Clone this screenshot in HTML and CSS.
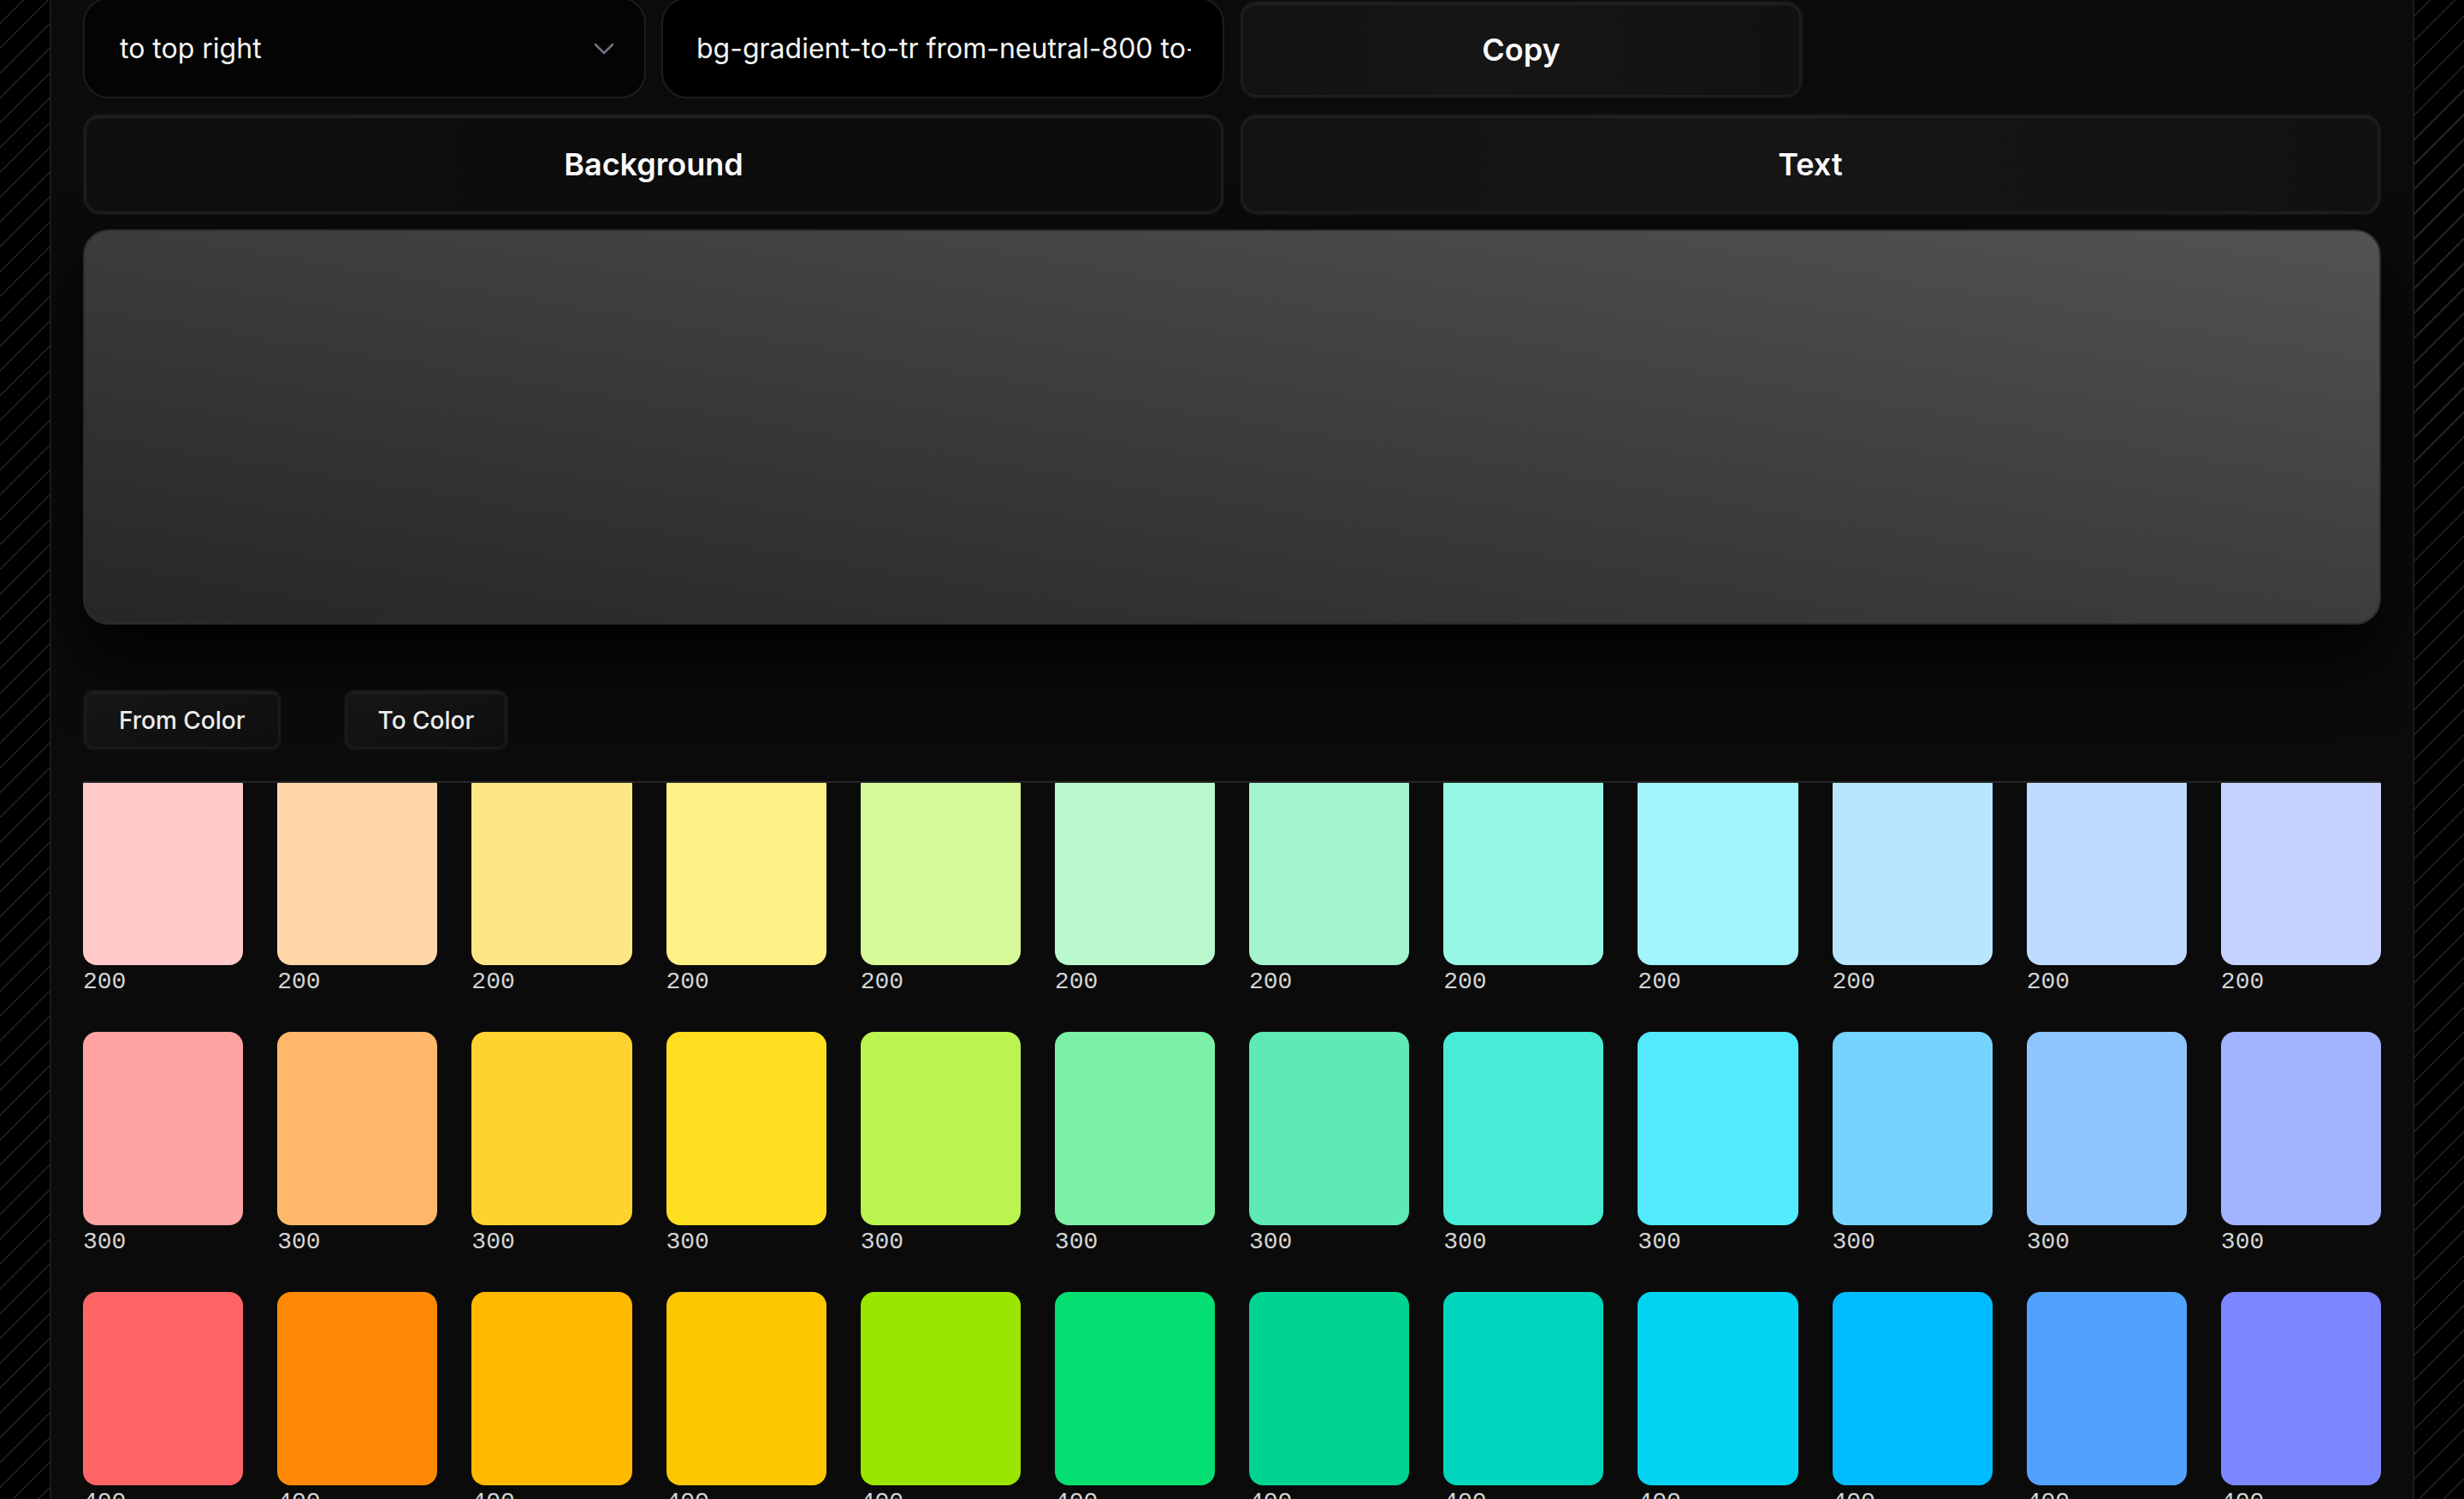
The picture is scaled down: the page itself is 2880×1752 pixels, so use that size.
FILE: index.html
```html
<!DOCTYPE html>
<html lang="en">
<head>
<meta charset="utf-8">
<title>Gradient Generator</title>
<link rel="stylesheet" href="styles.css">
</head>
<body>
<main class="page">
  <div class="controls">
    <div class="select">
      <span>to top right</span>
      <svg class="chev" width="26" height="16" viewBox="0 0 26 16"><path d="M3 3 L13 13 L23 3" fill="none" stroke="#6b7280" stroke-width="2.6" stroke-linecap="round" stroke-linejoin="round"/></svg>
    </div>
    <div class="input"><span>bg-gradient-to-tr from-neutral-800 to-neutral-600</span></div>
    <button class="btn copy">Copy</button>
  </div>
  <div class="modes">
    <button class="btn mode mode-active">Background</button>
    <button class="btn mode">Text</button>
  </div>
  <div class="preview"></div>
  <div class="tabs">
    <button class="tab">From Color</button>
    <button class="tab">To Color</button>
  </div>
  <div class="scroller">
    <div class="grid" id="grid"></div>
  </div>
</main>
<script src="app.js"></script>
</body>
</html>
```
FILE: styles.css
```css
* { box-sizing: border-box; }
html, body { margin: 0; height: 1752px; overflow: hidden; }
body {
  background-color: #000;
  background-image: repeating-linear-gradient(135deg, transparent 0 19px, #242424 19px 20.5px);
  font-family: Inter, "Noto Sans", sans-serif;
}
.page {
  width: 2764px;
  margin: 0 auto;
  height: 1752px;
  background: #0b0b0b;
  border-left: 2px solid #1a1a1a;
  border-right: 2px solid #1a1a1a;
  padding: 0 37px;
  overflow: hidden;
}
.controls {
  display: grid;
  grid-template-columns: repeat(4, 1fr);
  gap: 18px;
  height: 118px;
  margin-top: -3px;
}
.select, .input {
  background: #040404;
  border: 2px solid #1c1c1c;
  border-radius: 30px;
  display: flex;
  align-items: center;
  font-size: 32px;
  color: #f5f5f5;
  white-space: nowrap;
  overflow: hidden;
}
.select { padding: 0 34px 0 41px; justify-content: space-between; }
.input { background: #000; padding: 0 37px 0 39px; }
.input span { display: block; overflow: hidden; width: 100%; }
.chev { flex: none; margin-top: 2px; }
.btn {
  font-family: Inter, "Noto Sans", sans-serif;
  font-size: 36px;
  font-weight: 600;
  color: #fafafa;
  border: 2px solid #171717;
  border-radius: 20px;
  background: linear-gradient(90deg, #121212 0%, #161616 40%, #141414 70%, #111111 100%);
  box-shadow: inset 0 0 0 2px #1e1e1e, inset 0 3px 1px #252525;
  padding: 0;
}
.copy { margin-top: 4px; }
.modes {
  display: grid;
  grid-template-columns: 1fr 1fr;
  gap: 18px;
  height: 118px;
  margin-top: 18px;
}
.mode-active {
  background: linear-gradient(90deg, #0f0f0f 0%, #0c0c0c 50%, #0d0d0d 100%);
}
.preview {
  margin-top: 17px;
  height: 462px;
  border-radius: 30px;
  border: 2px solid #2b2b2b;
  background: linear-gradient(to top right, #262626, #525252);
  box-shadow: 0 40px 70px 10px rgba(0, 0, 0, 0.75);
}
.tabs {
  display: flex;
  gap: 73px;
  margin-top: 76px;
  height: 71px;
}
.tab {
  font-family: Inter, "Noto Sans", sans-serif;
  font-size: 28px;
  font-weight: 500;
  color: #ececec;
  padding: 0 40px;
  border: 2px solid #141414;
  border-radius: 12px;
  background: linear-gradient(160deg, #161616, #0e0e0e);
  box-shadow: inset 0 0 0 2px #1c1c1c, inset 0 3px 1px #232323;
}
.tab + .tab { padding: 0 38px; }
.scroller {
  margin-top: 36px;
  border-top: 2px solid #262626;
  overflow: hidden;
  height: 900px;
}
.grid {
  margin-top: -13px;
  display: grid;
  grid-template-columns: repeat(12, 1fr);
  column-gap: 40px;
  row-gap: 38px;
}
.cell { display: flex; flex-direction: column; }
.swatch { height: 226px; border-radius: 16px; }
.label {
  font-family: "Liberation Mono", "DejaVu Sans Mono", monospace;
  font-size: 28px;
  line-height: 40px;
  color: #d4d4d4;
}
```
FILE: app.js
```js
const rows = {
  200: ["#ffc9c9","#ffd6a7","#fee685","#fff085","#d8f999","#b9f8cf","#a4f4cf","#96f7e4","#a2f4fd","#b8e6fe","#bedbff","#c6d2ff"],
  300: ["#ffa2a2","#ffb86a","#ffd230","#ffdf20","#bbf451","#7bf1a8","#5ee9b5","#46ecd5","#53eafd","#74d4ff","#8ec5ff","#a3b3ff"],
  400: ["#ff6467","#ff8904","#ffb900","#fdc700","#9ae600","#05df72","#00d492","#00d5be","#00d3f2","#00bcff","#51a2ff","#7c86ff"]
};
const grid = document.getElementById("grid");
for (const shade of [200, 300, 400]) {
  rows[shade].forEach(c => {
    const cell = document.createElement("div");
    cell.className = "cell";
    const sw = document.createElement("div");
    sw.className = "swatch";
    sw.style.background = c;
    const lb = document.createElement("div");
    lb.className = "label";
    lb.textContent = shade;
    cell.appendChild(sw);
    cell.appendChild(lb);
    grid.appendChild(cell);
  });
}
```
